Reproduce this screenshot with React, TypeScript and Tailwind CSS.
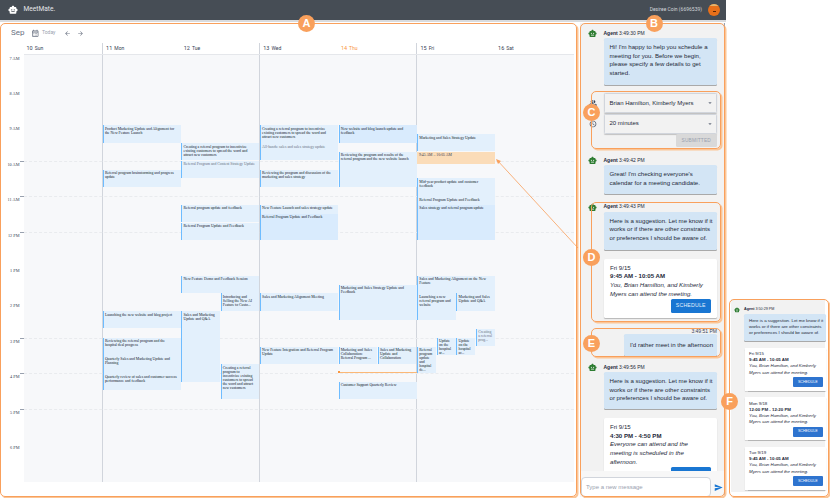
import { ReactNode } from "react";
import {
  MdArrowBack,
  MdArrowForward,
  MdArrowDropDown,
  MdOutlineCalendarMonth,
  MdOutlineAccessTime,
  MdOutlinePeopleAlt,
  MdSend,
  MdSmartToy,
} from "react-icons/md";

const HOUR = 35.4;
const DAY = 78.6;

type CalEvent = {
  day: number;
  start: number;
  end: number;
  title: string;
  left?: number;
  width?: number;
  muted?: boolean;
  dark?: boolean;
};

const events: CalEvent[] = [
  { day: 1, start: 9, end: 9.5, title: "Product Marketing Update and Alignment for the New Feature Launch" },
  { day: 1, start: 10.25, end: 10.75, title: "Referral program brainstorming and progress update" },
  { day: 1, start: 14.25, end: 14.75, title: "Launching the new website and blog project" },
  { day: 1, start: 15, end: 15.5, title: "Reviewing the referral program and the hospital deal progress" },
  { day: 1, start: 15.5, end: 16, title: "Quarterly Sales and Marketing Update and Planning" },
  { day: 1, start: 16, end: 16.5, title: "Quarterly review of sales and customer success performance and feedback" },

  { day: 2, start: 9.5, end: 10, title: "Creating a referral program to incentivize existing customers to spread the word and attract new customers" },
  { day: 2, start: 10, end: 10.5, title: "Referral Program and Content Strategy Update", muted: true },
  { day: 2, start: 11.25, end: 11.75, title: "Referral program update and feedback" },
  { day: 2, start: 11.75, end: 12.25, title: "Referral Program Update and Feedback" },
  { day: 2, start: 13.25, end: 13.75, title: "New Feature Demo and Feedback Session" },
  { day: 2, start: 13.75, end: 14.25, left: 0.5, width: 0.5, title: "Introducing and Selling the New AI Feature to Custo..." },
  { day: 2, start: 14.25, end: 16.25, width: 0.5, title: "Sales and Marketing Update and Q&A" },
  { day: 2, start: 15.75, end: 16.75, left: 0.5, width: 0.5, title: "Creating a referral program to incentivize existing customers to spread the word and attract new customers" },

  { day: 3, start: 9, end: 9.5, title: "Creating a referral program to incentivize existing customers to spread the word and attract new customers" },
  { day: 3, start: 9.5, end: 10, title: "All-hands: sales and sales strategy update", muted: true },
  { day: 3, start: 10.25, end: 10.75, title: "Reviewing the program and discussion of the marketing and sales strategy" },
  { day: 3, start: 11.25, end: 12.25, title: "New Feature Launch and sales strategy update" },
  { day: 3, start: 11.5, end: 12.25, title: "Referral Program Update and Feedback", dark: true },
  { day: 3, start: 13.75, end: 14.25, title: "Sales and Marketing Alignment Meeting" },
  { day: 3, start: 15.25, end: 15.75, title: "New Feature Integration and Referral Program Update" },

  { day: 4, start: 9, end: 9.5, title: "New website and blog launch update and feedback", dark: true },
  { day: 4, start: 9.75, end: 10.75, title: "Reviewing the program and results of the referral program and the new website launch" },
  { day: 4, start: 13.5, end: 14.5, title: "Marketing and Sales Strategy Update and Feedback" },
  { day: 4, start: 15.25, end: 15.75, width: 0.5, title: "Marketing and Sales Collaboration: Referral Program ..." },
  { day: 4, start: 15.25, end: 15.75, left: 0.5, width: 0.5, title: "Sales and Marketing Update and Collaboration" },
  { day: 4, start: 16.25, end: 16.75, title: "Customer Support Quarterly Review" },

  { day: 5, start: 9.25, end: 9.75, title: "Marketing and Sales Strategy Update" },
  { day: 5, start: 10.5, end: 11, title: "Mid-year product update and customer feedback" },
  { day: 5, start: 11, end: 11.25, title: "Referral Program Update and Feedback" },
  { day: 5, start: 11.25, end: 12.25, title: "Sales strategy and referral program update", dark: true },
  { day: 5, start: 13.25, end: 13.75, title: "Sales and Marketing Alignment on the New Feature" },
  { day: 5, start: 13.75, end: 14.5, width: 0.5, title: "Launching a new referral program and website" },
  { day: 5, start: 13.75, end: 14.25, left: 0.5, width: 0.5, title: "Marketing and Sales Update and Q&A" },
  { day: 5, start: 15.25, end: 16, width: 0.25, title: "Referral program update and hospital de..." },
  { day: 5, start: 15, end: 15.5, left: 0.25, width: 0.25, title: "Update on the hospital ar..." },
  { day: 5, start: 15, end: 15.5, left: 0.5, width: 0.25, title: "Update on the hospital ar..." },
  { day: 5, start: 14.75, end: 15.25, left: 0.75, width: 0.25, title: "Creating a referral prog...", muted: true },
];

const days = [
  ["10", "Sun"],
  ["11", "Mon"],
  ["12", "Tue"],
  ["13", "Wed"],
  ["14", "Thu"],
  ["15", "Fri"],
  ["16", "Sat"],
];

const hours = ["7 AM", "8 AM", "9 AM", "10 AM", "11 AM", "12 PM", "1 PM", "2 PM", "3 PM", "4 PM", "5 PM", "6 PM"];
const dashedHours = [3, 4, 5, 8, 9, 10];

const Calendar = () => {
  return (
    <div className="w-[577px] h-[474px] bg-white rounded-md font-['Roboto',sans-serif]">
      <div className="h-[20px] flex items-center text-gray-500 pl-[11px]">
        <span className="text-[8px] w-[20px]">Sep</span>
        <MdOutlineCalendarMonth className="w-[8.5px] h-[8.5px] text-gray-500" />
        <span className="text-[5px] text-gray-400 ml-[2.5px] w-[21.5px]">Today</span>
        <MdArrowBack className="w-[7px] h-[7px] text-gray-500" />
        <MdArrowForward className="w-[7px] h-[7px] text-gray-500 ml-[6px]" />
      </div>

      <div className="flex h-[11.5px] ml-[23.5px] w-[550.2px] border-b border-gray-200">
        {days.map(([num, name], i) => (
          <div
            key={num}
            className={`w-[78.6px] flex items-center pl-[3px] gap-[2px] ${
              i % 2 === 1 ? "border-l border-gray-300" : ""
            } ${i === 4 ? "text-[#f9963f]" : "text-gray-700"}`}
          >
            <span className="text-[5.5px]">{num}</span>
            <span className="text-[5px]">{name}</span>
          </div>
        ))}
      </div>

      <div className="flex">
        <div className="w-[23.5px] h-[427.5px] relative text-[4.3px] text-gray-700 font-['Liberation_Serif',serif]">
          {hours.map((h, i) => (
            <div
              key={h}
              className="absolute right-[4px] whitespace-nowrap leading-none"
              style={{ top: i * HOUR + 2 }}
            >
              {h}
            </div>
          ))}
          {dashedHours.map((i) => (
            <div key={i} className="absolute right-0 w-[3.5px] h-px bg-gray-400" style={{ top: i * HOUR }} />
          ))}
        </div>

        <div className="relative w-[550.2px] h-[427.5px] bg-[#f7f8fa] flex">
          {days.map(([num], i) => (
            <div key={num} className={`w-[78.6px] h-full ${i % 2 === 1 ? "border-l border-gray-300" : ""}`} />
          ))}
          {dashedHours.map((i) => (
            <div
              key={i}
              className="absolute left-0 right-0 border-t border-dashed border-[#e9ebee]"
              style={{ top: i * HOUR }}
            />
          ))}

          {events.map((e, i) => (
            <div
              key={i}
              className={`absolute overflow-hidden border-l border-[#6ebcff] pl-[1.2px] pr-[3px] pt-[1.5px] font-['Liberation_Serif',serif] text-[3.8px] leading-[4px] ${
                e.dark ? "bg-[#d9ebfd]" : "bg-[#e3f0fc]"
              } ${e.muted ? "text-gray-500" : "text-gray-900"}`}
              style={{
                left: (e.day + (e.left ?? 0)) * DAY + 0.6,
                width: (e.width ?? 1) * DAY - 0.6,
                top: (e.start - 7) * HOUR,
                height: (e.end - e.start) * HOUR - 0.4,
              }}
            >
              {e.title}
            </div>
          ))}

          <div
            className="absolute bg-[#fbdcb8] pl-[2px] pt-[1.5px] text-[3.8px] leading-[4px] text-gray-700 font-['Liberation_Serif',serif]"
            style={{ left: 5 * DAY + 0.4, width: DAY, top: 2.75 * HOUR, height: 0.34 * HOUR }}
          >
            9:45 AM – 10:05 AM
          </div>

          <div className="absolute h-[1px] bg-[#fbb877]" style={{ left: 4 * DAY + 1, width: DAY, top: 8.97 * HOUR }} />
          <div className="absolute w-[2px] h-[2px] bg-[#f9963f]" style={{ left: 4 * DAY, top: 8.94 * HOUR }} />
        </div>
      </div>
    </div>
  );
};

const AgentHeader = ({ time, small }: { time: string; small?: boolean }) => (
  <div className={`flex items-center ${small ? "h-[7px]" : "h-[8px]"}`}>
    <MdSmartToy className={small ? "w-[6px] h-[6px] text-[#2e7d32] mr-[4px]" : "w-[9px] h-[9px] text-[#2e7d32] mr-[6.5px]"} />
    <span className={small ? "text-[3.7px] text-gray-800" : "text-[5px] text-gray-800"}>
      <b>Agent</b> {time}
    </span>
  </div>
);

const Bubble = ({ children, className }: { children: ReactNode; className?: string }) => (
  <div
    className={`bg-[#d3e5f5] rounded-[1.5px] shadow-[0_1px_0.5px_rgba(0,0,0,0.3)] text-[6.1px] leading-[8.7px] text-gray-800 ${className ?? ""}`}
  >
    {children}
  </div>
);

const ScheduleBtn = ({ small }: { small?: boolean }) => (
  <div
    className={
      small
        ? "absolute right-[3.5px] bottom-[3.5px] w-[29.5px] h-[10px] bg-[#2e74cf] rounded-[1px] text-white text-[3.6px] flex items-center justify-center"
        : "absolute right-[6px] bottom-[5px] w-[40.5px] h-[14px] bg-[#1976d2] rounded-[1.5px] text-[#e3f0fc] text-[5.2px] tracking-[0.2px] flex items-center justify-center"
    }
  >
    SCHEDULE
  </div>
);

const Dropdown = ({ label }: { label: string }) => (
  <div className="h-[20px] mb-[0.5px] flex items-center justify-between pl-[5px] pr-[2px] rounded-[1.5px] border border-gray-300 shadow-[0_0.5px_1px_rgba(0,0,0,0.2)] text-[6px] text-gray-800">
    {label}
    <MdArrowDropDown className="w-[8px] h-[8px] text-gray-500" />
  </div>
);

const Chat = () => {
  return (
    <div className="w-[145px] h-[474px] bg-[#f2f2f2] flex flex-col relative overflow-hidden border-r border-gray-400 font-['Liberation_Sans',sans-serif]">
      <div className="flex-1 overflow-hidden pl-[8px] pr-[7px] pt-[6.5px]">
        <AgentHeader time="3:49:30 PM" />
        <Bubble className="ml-[15.5px] mt-[0.5px] h-[47px] pl-[6px] pr-[3px] pt-[5px]">
          Hi! I'm happy to help you schedule a meeting for you. Before we begin, please specify a few details to get
          started.
        </Bubble>

        <div className="flex mt-[8px]">
          <div className="w-[15.5px] flex flex-col items-start pl-[1px]">
            <MdOutlinePeopleAlt className="w-[8px] h-[8px] text-gray-700 mt-[6px]" />
            <MdOutlineAccessTime className="w-[8px] h-[8px] text-gray-700 mt-[12.5px]" />
          </div>
          <div className="flex-1">
            <Dropdown label="Brian Hamilton, Kimberly Myers" />
            <Dropdown label="20 minutes" />
            <div className="ml-auto w-[41.5px] h-[13px] bg-[#d9d9d9] rounded-[1.5px] text-[4.8px] tracking-[0.2px] text-gray-400 flex items-center justify-center">
              SUBMITTED
            </div>
          </div>
        </div>

        <div className="mt-[9.5px]">
          <AgentHeader time="3:49:42 PM" />
        </div>
        <Bubble className="ml-[15.5px] mt-[0.5px] h-[29px] pl-[6px] pr-[3px] pt-[5px]">
          Great! I'm checking everyone's calendar for a meeting candidate.
        </Bubble>

        <div className="mt-[9px]">
          <AgentHeader time="3:49:43 PM" />
        </div>
        <Bubble className="ml-[15.5px] mt-[0.5px] h-[38px] pl-[6px] pr-[3px] pt-[5px]">
          Here is a suggestion. Let me know if it works or if there are other constraints or preferences I should be
          aware of.
        </Bubble>

        <div className="relative ml-[16px] mt-[9px] h-[59px] bg-white rounded-[1.5px] shadow-[0_1px_1px_rgba(0,0,0,0.25)] pl-[6px] pr-[8px] pt-[5px] text-[6.1px] leading-[8.7px] text-gray-800">
          <div>Fri 9/15</div>
          <div className="font-bold">9:45 AM - 10:05 AM</div>
          <div className="italic">You, Brian Hamilton, and Kimberly Myers can attend the meeting.</div>
          <ScheduleBtn />
        </div>

        <div className="text-right text-[5px] leading-[6px] text-gray-700 mt-[10px]">3:49:51 PM</div>
        <Bubble className="ml-[36px] mt-[0px] h-[22px] pl-[6px] pt-[7px]">I'd rather meet in the afternoon</Bubble>

        <div className="mt-[8px]">
          <AgentHeader time="3:49:56 PM" />
        </div>
        <Bubble className="ml-[15.5px] mt-[0.5px] h-[37px] pl-[6px] pr-[3px] pt-[5px]">
          Here is a suggestion. Let me know if it works or if there are other constraints or preferences I should be
          aware of.
        </Bubble>
        <div className="relative ml-[16px] mt-[9px] h-[68px] bg-white rounded-[1.5px] shadow-[0_1px_1px_rgba(0,0,0,0.25)] pl-[6px] pr-[14px] pt-[5px] text-[6.1px] leading-[8.7px] text-gray-800">
          <div>Fri 9/15</div>
          <div className="font-bold">4:30 PM - 4:50 PM</div>
          <div className="italic">Everyone can attend and the meeting is scheduled in the afternoon.</div>
          <ScheduleBtn />
        </div>
      </div>

      <div className="absolute left-0 right-0 bottom-0 h-[26px] bg-[#f7f7f7] flex items-end pl-[1px]">
        <div className="w-[129.5px] h-[20px] bg-white border border-gray-300 rounded-[4px] flex items-center pl-[4px] text-[6px] text-gray-400">
          Type a new message
        </div>
        <MdSend className="w-[9px] h-[9px] text-[#1976d2] ml-[3px] mb-[5.5px]" />
      </div>
    </div>
  );
};

const SideOptions = () => {
  const opts = [
    ["Fri 9/15", "9:45 AM - 10:05 AM"],
    ["Mon 9/18", "12:00 PM - 12:20 PM"],
    ["Tue 9/19", "9:45 AM - 10:05 AM"],
  ];
  return (
    <div className="w-[94px] h-[193px] bg-[#f2f2f2] ml-[1px] pl-[3px] pt-[7.5px] font-['Liberation_Sans',sans-serif]">
      <AgentHeader time="3:50:29 PM" small />
      <Bubble className="ml-[10px] mt-[0px] h-[27.5px] w-[82px] pl-[5px] pt-[4px] pr-[1px] !text-[4.4px] !leading-[6.2px]">
        Here is a suggestion. Let me know if it works or if there are other constraints or preferences I should be
        aware of.
      </Bubble>
      {opts.map(([d, t]) => (
        <div
          key={d}
          className="relative ml-[10.5px] mt-[6.5px] w-[81.5px] h-[43px] bg-white shadow-[0_0.5px_1px_rgba(0,0,0,0.25)] pl-[4.5px] pr-[8px] pt-[3.5px] text-[4.4px] leading-[6.2px] text-gray-800"
        >
          <div>{d}</div>
          <div className="font-bold">{t}</div>
          <div className="italic">You, Brian Hamilton, and Kimberly Myers can attend the meeting.</div>
          <ScheduleBtn small />
        </div>
      ))}
    </div>
  );
};

const Badge = ({ label, x, y }: { label: string; x: number; y: number }) => (
  <div
    className="absolute w-[17px] h-[17px] rounded-full bg-[#f9a05c] text-white text-[11px] font-bold flex items-center justify-center font-['Liberation_Sans',sans-serif]"
    style={{ left: x - 8.5, top: y - 8.5 }}
  >
    {label}
  </div>
);

const Box = ({ x, y, w, h }: { x: number; y: number; w: number; h: number }) => (
  <div
    className="absolute border border-[#f9a05c] rounded-[5px] shadow-[1.5px_1.5px_0_#fbc596]"
    style={{ left: x, top: y, width: w, height: h }}
  />
);

const App = () => {
  return (
    <div className="relative w-[830px] h-[498px] bg-white overflow-hidden">
      <div className="w-[726px] h-[22px] bg-[#d9dbdd]">
        <div className="h-[20px] bg-[#464d55] flex items-center justify-between pl-[7.5px] pr-[6px] font-['Roboto',sans-serif]">
          <div className="flex items-center">
            <MdSmartToy className="w-[10px] h-[10px] text-white" />
            <span className="ml-[6px] text-[6.6px] text-gray-200">MeetMate.</span>
          </div>
          <div className="flex items-center">
            <span className="text-[5px] text-gray-300">Desiree Coin (6696539)</span>
            <div className="ml-[6px] w-[12px] h-[12px] rounded-full bg-[#e8701a] relative overflow-hidden">
              <div className="absolute top-0 left-0 right-0 h-[2px] bg-[#e3b56f]" />
              <div className="absolute left-[4.5px] top-[7px] w-[3px] h-[1px] bg-[#5a2504]" />
            </div>
          </div>
        </div>
      </div>

      <div className="flex pt-[1px]">
        <Calendar />
        <div className="ml-[3px]">
          <Chat />
        </div>
        <div className="ml-[5px] mt-[276px]">
          <SideOptions />
        </div>
      </div>

      {/* annotations */}
      <Box x={0} y={23} w={577} h={474} />
      <Box x={580} y={23} w={145} h={474} />
      <Box x={590.5} y={90.5} w={130.5} h={58.5} />
      <Box x={590.5} y={202} w={130.5} h={120} />
      <Box x={590.5} y={328} w={130.5} h={29} />
      <Box x={729} y={299} w={100} h={198} />
      <svg className="absolute left-0 top-0 pointer-events-none" width="830" height="498">
        <line x1="578" y1="248" x2="497" y2="160" stroke="#f9a05c" strokeWidth="0.8" />
        <path d="M496 159 L501 161 L498 164 Z" fill="#f9a05c" />
      </svg>
      <Badge label="A" x={306.5} y={23.5} />
      <Badge label="B" x={654} y={23.5} />
      <Badge label="C" x={591.5} y={112} />
      <Badge label="D" x={591.5} y={257.5} />
      <Badge label="E" x={591.5} y={343.5} />
      <Badge label="F" x={729.5} y={401.5} />
    </div>
  );
};

export default App;
